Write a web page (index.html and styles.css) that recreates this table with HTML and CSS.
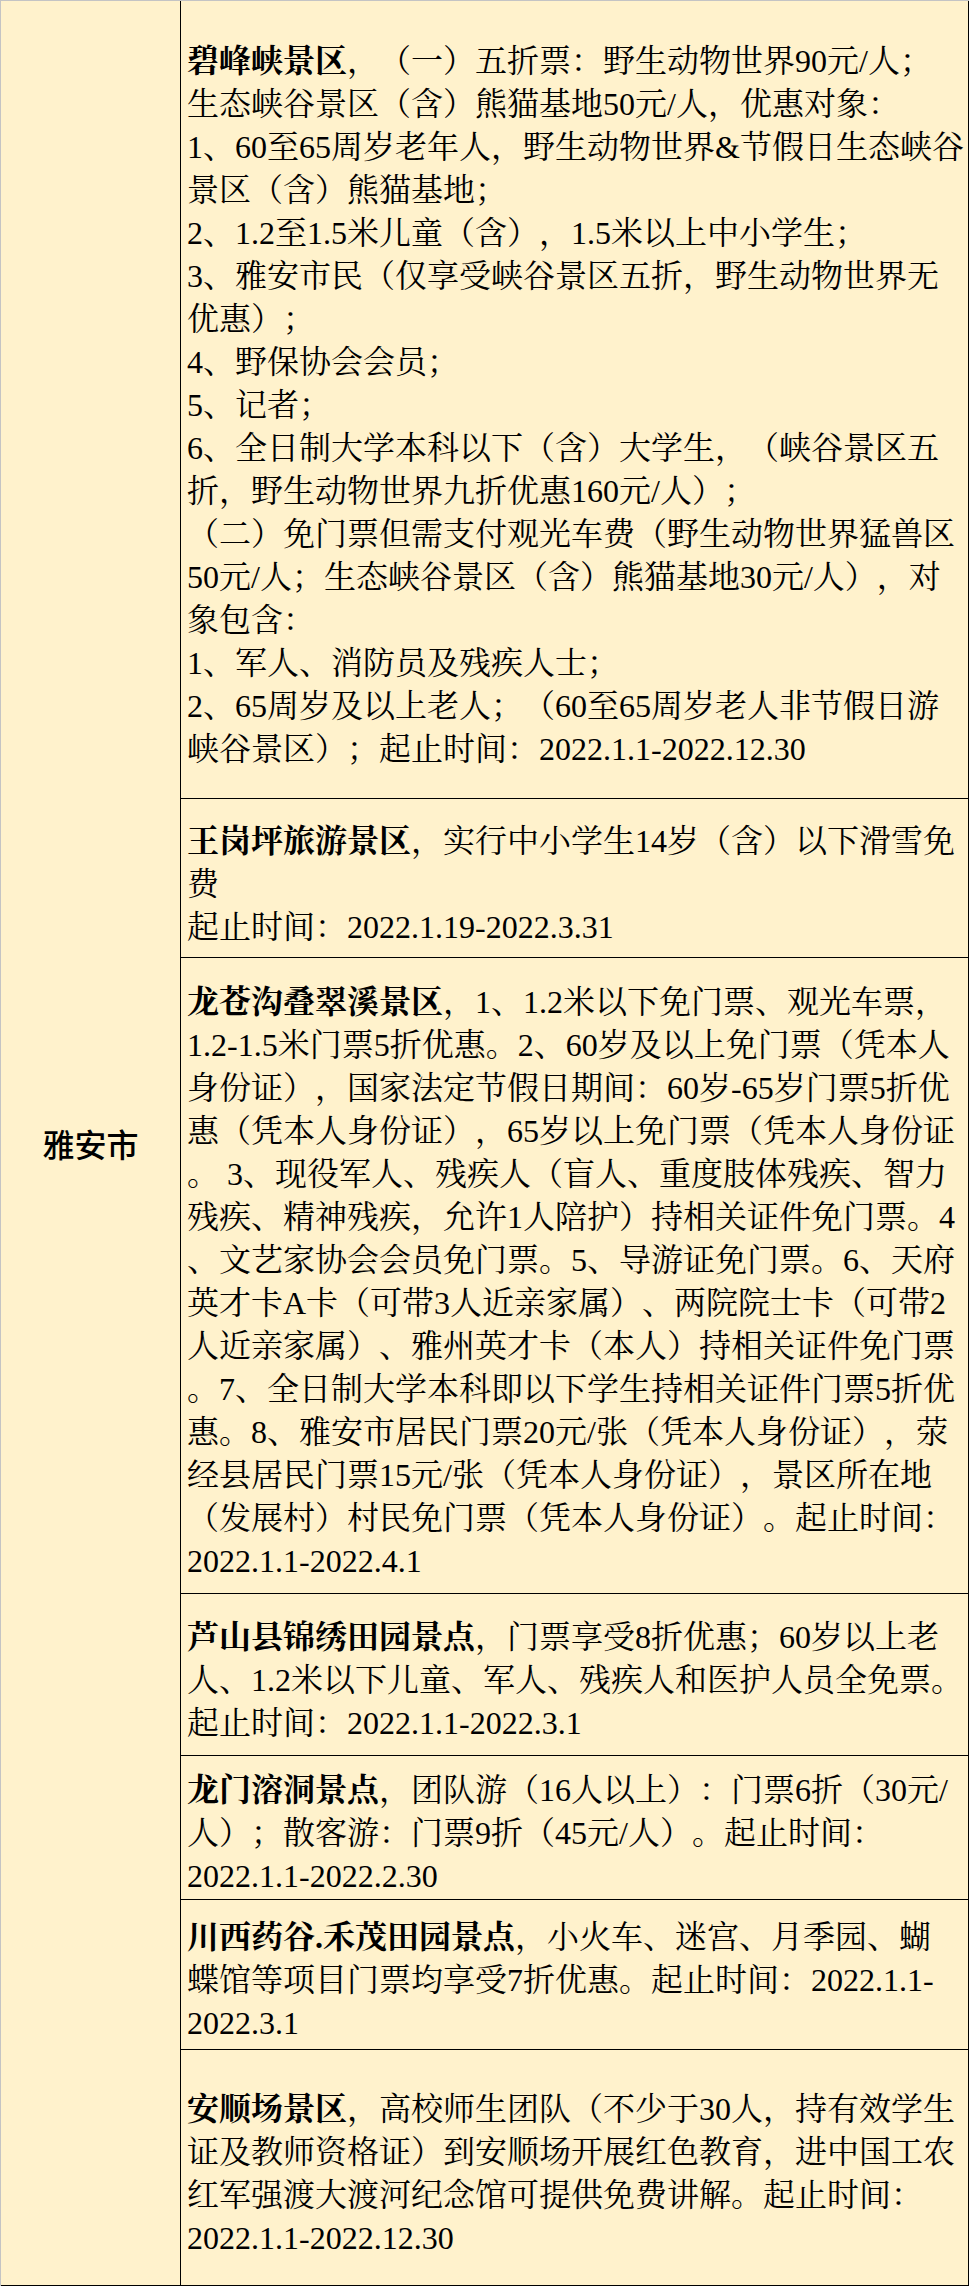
FILE: index.html
```html
<!DOCTYPE html>
<html lang="zh-CN">
<head>
<meta charset="utf-8">
<title>雅安市景区优惠</title>
<link rel="stylesheet" href="styles.css">
</head>
<body>
<div class="sheet">
  <div class="city">雅安市</div>
  <div class="list">
    <div class="row r1"><p class="txt"><b>碧峰峡景区</b>，（一）五折票：野生动物世界90元/人；<br>生态峡谷景区（含）熊猫基地50元/人，优惠对象：<br>1、60至65周岁老年人，野生动物世界&amp;节假日生态峡谷<br>景区（含）熊猫基地；<br>2、1.2至1.5米儿童（含），1.5米以上中小学生；<br>3、雅安市民（仅享受峡谷景区五折，野生动物世界无<br>优惠）；<br>4、野保协会会员；<br>5、记者；<br>6、全日制大学本科以下（含）大学生，（峡谷景区五<br>折，野生动物世界九折优惠160元/人）；<br>（二）免门票但需支付观光车费（野生动物世界猛兽区<br>50元/人；生态峡谷景区（含）熊猫基地30元/人），对<br>象包含：<br>1、军人、消防员及残疾人士；<br>2、65周岁及以上老人；（60至65周岁老人非节假日游<br>峡谷景区）；起止时间：2022.1.1-2022.12.30</p></div>
    <div class="row r2"><p class="txt"><b>王岗坪旅游景区</b>，实行中小学生14岁（含）以下滑雪免<br>费<br>起止时间：2022.1.19-2022.3.31</p></div>
    <div class="row r3"><p class="txt"><b>龙苍沟叠翠溪景区</b>，1、1.2米以下免门票、观光车票，<br>1.2-1.5米门票5折优惠。2、60岁及以上免门票（凭本人<br>身份证），国家法定节假日期间：60岁-65岁门票5折优<br>惠（凭本人身份证），65岁以上免门票（凭本人身份证<br>。 3、现役军人、残疾人（盲人、重度肢体残疾、智力<br>残疾、精神残疾，允许1人陪护）持相关证件免门票。4<br>、文艺家协会会员免门票。5、导游证免门票。6、天府<br>英才卡A卡（可带3人近亲家属）、两院院士卡（可带2<br>人近亲家属）、雅州英才卡（本人）持相关证件免门票<br>。7、全日制大学本科即以下学生持相关证件门票5折优<br>惠。8、雅安市居民门票20元/张（凭本人身份证），荥<br>经县居民门票15元/张（凭本人身份证），景区所在地<br>（发展村）村民免门票（凭本人身份证）。起止时间：<br>2022.1.1-2022.4.1</p></div>
    <div class="row r4"><p class="txt"><b>芦山县锦绣田园景点</b>，门票享受8折优惠；60岁以上老<br>人、1.2米以下儿童、军人、残疾人和医护人员全免票。<br>起止时间：2022.1.1-2022.3.1</p></div>
    <div class="row r5"><p class="txt"><b>龙门溶洞景点</b>，团队游（16人以上）：门票6折（30元/<br>人）；散客游：门票9折（45元/人）。起止时间：<br>2022.1.1-2022.2.30</p></div>
    <div class="row r6"><p class="txt"><b>川西药谷.禾茂田园景点</b>，小火车、迷宫、月季园、蝴<br>蝶馆等项目门票均享受7折优惠。起止时间：2022.1.1-<br>2022.3.1</p></div>
    <div class="row r7"><p class="txt"><b>安顺场景区</b>，高校师生团队（不少于30人，持有效学生<br>证及教师资格证）到安顺场开展红色教育，进中国工农<br>红军强渡大渡河纪念馆可提供免费讲解。起止时间：<br>2022.1.1-2022.12.30</p></div>
  </div>
</div>
</body>
</html>
```

FILE: styles.css
```css
html, body {
  margin: 0;
  padding: 0;
  background: #fff2cc;
}

.sheet {
  width: 969px;
  height: 2286px;
  box-sizing: border-box;
  display: grid;
  grid-template-columns: 180px 788px;
  border-top: 1px solid #c4c4c4;
  border-left: 1px solid #c4c4c4;
  background: #fff2cc;
  color: #000;
}

.city {
  box-sizing: border-box;
  border-right: 1px solid #000;
  border-bottom: 1px solid #000;
  display: flex;
  align-items: center;
  justify-content: center;
  font-family: "Noto Sans CJK SC", sans-serif;
  font-size: 32px;
  font-weight: 500;
}

.list {
  display: flex;
  flex-direction: column;
}

.row {
  box-sizing: border-box;
  border-right: 1px solid #000;
  border-bottom: 1px solid #000;
  display: flex;
  align-items: center;
  padding: 12px 0 0 6px;
}

.r1 { height: 798px; }
.r2 { height: 159px; }
.r3 { height: 636px; }
.r4 { height: 162px; }
.r5 { height: 144px; }
.r6 { height: 150px; }
.r7 { height: 236px; }

.txt {
  margin: 0;
  white-space: nowrap;
  text-spacing-trim: space-all;
  font-family: "Liberation Serif", "Noto Serif CJK SC", "Noto Sans CJK SC", serif;
  font-size: 32px;
  line-height: 43px;
}

.txt b {
  font-weight: 700;
}
```
